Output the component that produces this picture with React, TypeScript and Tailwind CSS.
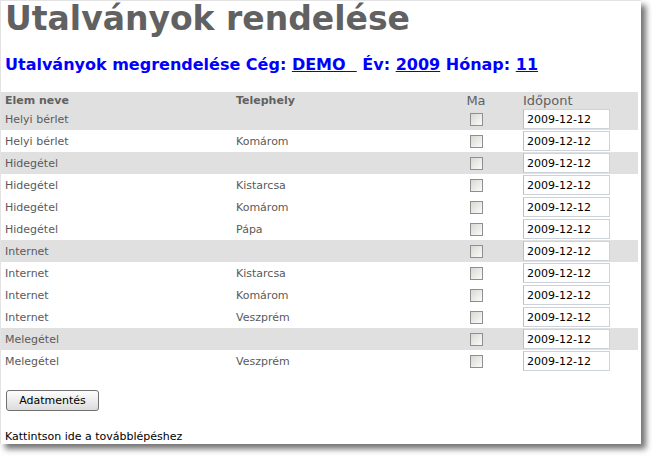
const rows: { name: string; site: string }[] = [
  { name: "Helyi bérlet", site: "" },
  { name: "Helyi bérlet", site: "Komárom" },
  { name: "Hidegétel", site: "" },
  { name: "Hidegétel", site: "Kistarcsa" },
  { name: "Hidegétel", site: "Komárom" },
  { name: "Hidegétel", site: "Pápa" },
  { name: "Internet", site: "" },
  { name: "Internet", site: "Kistarcsa" },
  { name: "Internet", site: "Komárom" },
  { name: "Internet", site: "Veszprém" },
  { name: "Melegétel", site: "" },
  { name: "Melegétel", site: "Veszprém" },
];

const Checkbox = () => (
  <span className="block w-[13px] h-[13px] border border-[#8e8f8f] bg-gradient-to-br from-[#d8d8d4] to-[#fbfbf9]" />
);

export default function App() {
  return (
    <div className="w-[652px] h-[456px] bg-white font-['DejaVu_Sans',sans-serif]">
      <div className="w-[641px] h-[444px] overflow-hidden border-t border-l border-[#e3e3e3] bg-white shadow-[5px_5px_6px_rgba(0,0,0,0.55)] flex flex-col">
        <h1 className="shrink-0 pl-[4px] h-[40px] text-[33px] leading-[36px] font-bold text-[#616161]">
          Utalványok rendelése
        </h1>
        <h2 className="shrink-0 pl-[4px] mt-[13px] h-[38px] text-[16px] leading-[22px] font-bold text-[#0000ff]">
          Utalványok megrendelése Cég: <span className="underline">DEMO&nbsp;&nbsp;</span> Év:{" "}
          <span className="underline">2009</span> Hónap: <span className="underline">11</span>
        </h2>

        <div className="shrink-0 flex flex-col text-[11px] text-[#5a5a5a]">
          <div className="w-[637px] h-[16px] flex items-center bg-[#e0e0e0] text-[#616161]">
            <div className="w-[235px] pl-[4px] pt-[2px] font-bold">Elem neve</div>
            <div className="w-[212px] pt-[2px] font-bold">Telephely</div>
            <div className="w-[56px] text-center text-[13px] pt-[1px]">Ma</div>
            <div className="pl-[19px] text-[13px] pt-[1px]">Időpont</div>
          </div>
          {rows.map((r, i) => (
            <div
              key={i}
              className={`w-[637px] h-[22px] flex items-center ${
                r.site === "" ? "bg-[#e0e0e0]" : "bg-white"
              }`}
            >
              <div className="w-[235px] pl-[4px] pt-[2px]">{r.name}</div>
              <div className="w-[212px] pt-[2px]">{r.site}</div>
              <div className="w-[56px] flex justify-center">
                <Checkbox />
              </div>
              <div className="pl-[19px]">
                <div className="w-[87px] h-[20px] border border-[#cdd3dc] border-l-[#b8bec8] bg-white pl-[3px] text-[11px] leading-[19px] text-black">
                  2009-12-12
                </div>
              </div>
            </div>
          ))}
        </div>

        <div className="shrink-0 flex pl-[5px] mt-[18px]">
          <button className="w-[93px] h-[21px] border border-[#707070] rounded-[3px] bg-gradient-to-b from-[#fdfdfd] to-[#dcdcdc] text-[11px] leading-[19px] text-black">
            Adatmentés
          </button>
        </div>
        <div className="shrink-0 pl-[4px] mt-[19px] text-[11px] leading-[14px] text-black">
          Kattintson ide a továbblépéshez
        </div>
      </div>
    </div>
  );
}
